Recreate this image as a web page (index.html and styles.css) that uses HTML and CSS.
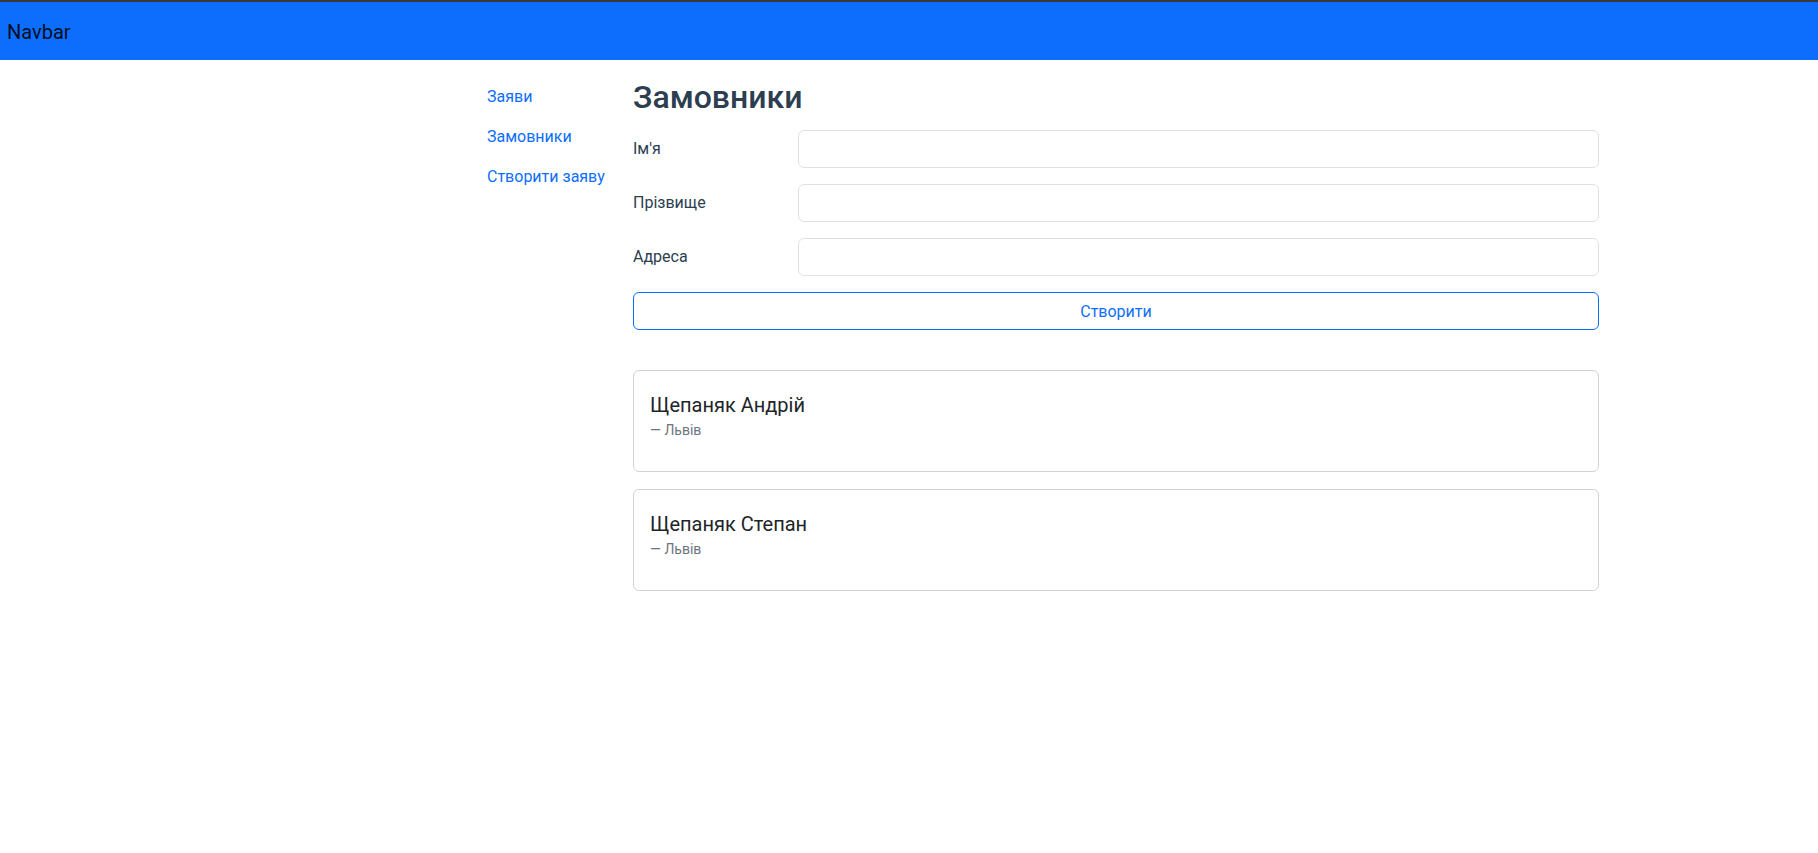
FILE: index.html
```html
<!DOCTYPE html>
<html lang="uk">
<head>
<meta charset="utf-8">
<title>Замовники</title>
<link rel="stylesheet" href="styles.css">
</head>
<body>
<nav class="navbar">
  <a class="navbar-brand" href="#">Navbar</a>
</nav>
<div class="page">
  <aside class="sidebar">
    <a class="nav-link" href="#">Заяви</a>
    <a class="nav-link" href="#">Замовники</a>
    <a class="nav-link" href="#">Створити заяву</a>
  </aside>
  <main class="main">
    <h2 class="title">Замовники</h2>
    <form class="form">
      <div class="form-row">
        <label class="form-label" for="first">Ім'я</label>
        <input class="form-input" id="first" type="text">
      </div>
      <div class="form-row">
        <label class="form-label" for="last">Прізвище</label>
        <input class="form-input" id="last" type="text">
      </div>
      <div class="form-row">
        <label class="form-label" for="addr">Адреса</label>
        <input class="form-input" id="addr" type="text">
      </div>
      <button class="btn-create" type="button">Створити</button>
    </form>
    <div class="cards">
      <div class="card">
        <h5 class="card-title">Щепаняк Андрій</h5>
        <div class="card-footer-text">Львів</div>
      </div>
      <div class="card">
        <h5 class="card-title">Щепаняк Степан</h5>
        <div class="card-footer-text">Львів</div>
      </div>
    </div>
  </main>
</div>
</body>
</html>
```
FILE: styles.css
```css
* {
  box-sizing: border-box;
}

body {
  margin: 0;
  font-family: Roboto, "Noto Sans", sans-serif;
  font-size: 16px;
  line-height: 1.5;
  color: #212529;
  background: #fff;
}

.navbar {
  height: 60px;
  border-top: 2px solid #3a3a3a;
  background: #0d6efd;
  padding: 15px 0 0 7px;
}

.navbar-brand {
  display: inline-block;
  font-size: 20px;
  line-height: 30px;
  color: rgba(0, 0, 0, 0.9);
  text-decoration: none;
}

.page {
  display: flex;
  padding: 16px 0 0 471px;
}

.sidebar {
  width: 150px;
  padding-top: 1px;
  display: flex;
  flex-direction: column;
}

.nav-link {
  display: block;
  padding: 8px 0 8px 16px;
  line-height: 24px;
  color: #0d6efd;
  text-decoration: none;
  white-space: nowrap;
}

.main {
  width: 990px;
  padding: 0 12px;
}

.title {
  margin: 2px 0 14px;
  font-size: 32px;
  line-height: 38px;
  font-weight: 500;
  color: #2c3e50;
}

.form {
  display: flex;
  flex-direction: column;
}

.form-row {
  display: grid;
  grid-template-columns: 165px 1fr;
  align-items: center;
  margin-bottom: 16px;
}

.form-label {
  color: #2c3e50;
  line-height: 24px;
}

.form-input {
  height: 38px;
  border: 1px solid #dee2e6;
  border-radius: 6px;
  padding: 6px 12px;
  font: inherit;
  background: #fff;
}

.btn-create {
  height: 38px;
  width: 100%;
  border: 1px solid #0d6efd;
  border-radius: 6px;
  background: #fff;
  color: #0d6efd;
  font: inherit;
  line-height: 24px;
  padding: 7px 12px 5px;
}

.cards {
  margin-top: 40px;
  display: flex;
  flex-direction: column;
  gap: 17px;
}

.card {
  height: 102px;
  border: 1px solid rgba(0, 0, 0, 0.175);
  border-radius: 6px;
  padding: 22px 16px 0;
}

.card-title {
  margin: 0 0 3px;
  font-size: 20px;
  line-height: 24px;
  font-weight: 400;
  color: #212529;
}

.card-footer-text {
  font-size: 14px;
  line-height: 21px;
  color: #6c757d;
}

.card-footer-text::before {
  content: "\2014\00A0";
}
```
